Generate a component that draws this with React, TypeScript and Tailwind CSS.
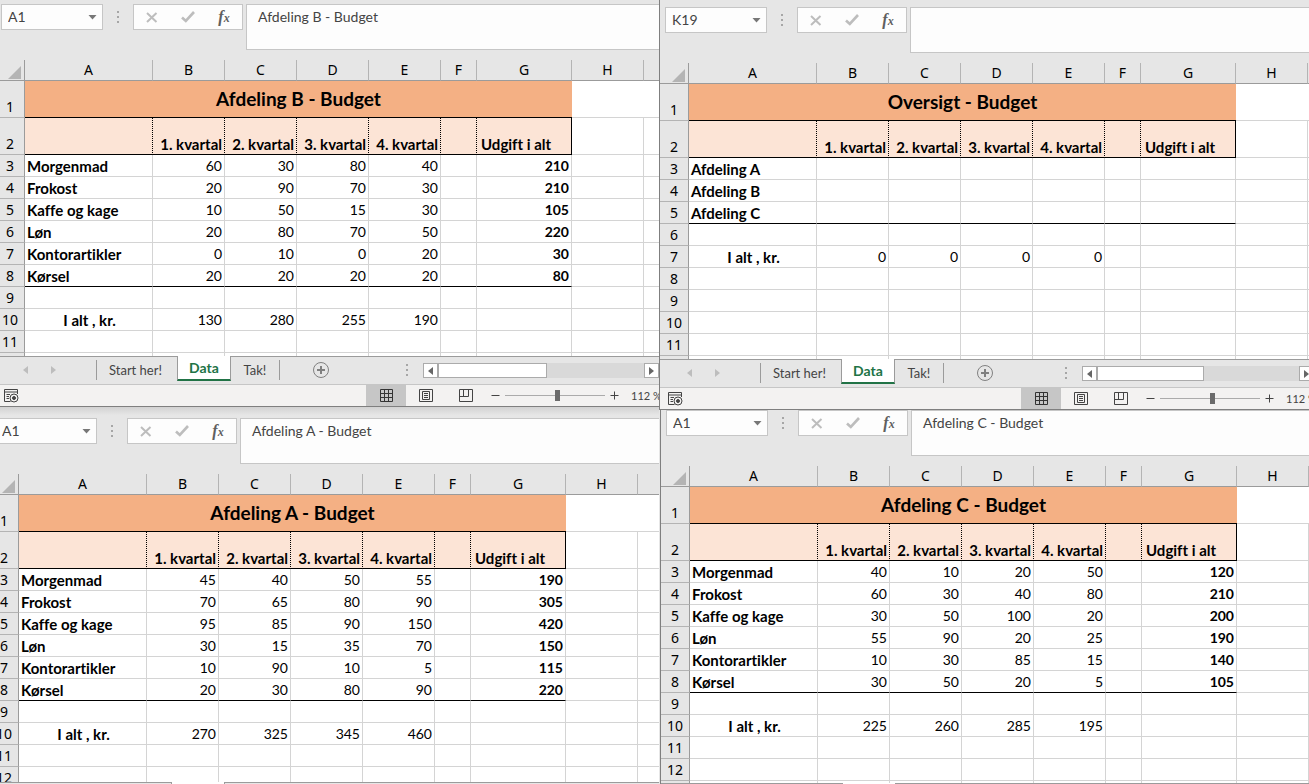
import React from 'react';
import { clsx } from 'clsx';

type Row = {
  label?: string;
  center?: boolean;
  values?: number[];
  total?: number;
  closing?: boolean;
};

type Book = {
  id: string;
  cell: string;
  formula: string;
  title: string;
  rows: Row[];
};

const quarters = ['1. kvartal', '2. kvartal', '3. kvartal', '4. kvartal'];
const letters = ['A', 'B', 'C', 'D', 'E', 'F', 'G', 'H', ''];

const afdelingA: Book = {
  id: 'a',
  cell: 'A1',
  formula: 'Afdeling A - Budget',
  title: 'Afdeling A - Budget',
  rows: [
    { label: 'Morgenmad', values: [45, 40, 50, 55], total: 190 },
    { label: 'Frokost', values: [70, 65, 80, 90], total: 305 },
    { label: 'Kaffe og kage', values: [95, 85, 90, 150], total: 420 },
    { label: 'Løn', values: [30, 15, 35, 70], total: 150 },
    { label: 'Kontorartikler', values: [10, 90, 10, 5], total: 115 },
    { label: 'Kørsel', values: [20, 30, 80, 90], total: 220, closing: true },
    {},
    { label: 'I alt , kr.', center: true, values: [270, 325, 345, 460] },
    {},
    {},
  ],
};

const afdelingB: Book = {
  id: 'b',
  cell: 'A1',
  formula: 'Afdeling B - Budget',
  title: 'Afdeling B - Budget',
  rows: [
    { label: 'Morgenmad', values: [60, 30, 80, 40], total: 210 },
    { label: 'Frokost', values: [20, 90, 70, 30], total: 210 },
    { label: 'Kaffe og kage', values: [10, 50, 15, 30], total: 105 },
    { label: 'Løn', values: [20, 80, 70, 50], total: 220 },
    { label: 'Kontorartikler', values: [0, 10, 0, 20], total: 30 },
    { label: 'Kørsel', values: [20, 20, 20, 20], total: 80, closing: true },
    {},
    { label: 'I alt , kr.', center: true, values: [130, 280, 255, 190] },
    {},
  ],
};

const afdelingC: Book = {
  id: 'c',
  cell: 'A1',
  formula: 'Afdeling C - Budget',
  title: 'Afdeling C - Budget',
  rows: [
    { label: 'Morgenmad', values: [40, 10, 20, 50], total: 120 },
    { label: 'Frokost', values: [60, 30, 40, 80], total: 210 },
    { label: 'Kaffe og kage', values: [30, 50, 100, 20], total: 200 },
    { label: 'Løn', values: [55, 90, 20, 25], total: 190 },
    { label: 'Kontorartikler', values: [10, 30, 85, 15], total: 140 },
    { label: 'Kørsel', values: [30, 50, 20, 5], total: 105, closing: true },
    {},
    { label: 'I alt , kr.', center: true, values: [225, 260, 285, 195] },
    {},
    {},
  ],
};

const oversigt: Book = {
  id: 'oversigt',
  cell: 'K19',
  formula: '',
  title: 'Oversigt - Budget',
  rows: [
    { label: 'Afdeling A' },
    { label: 'Afdeling B' },
    { label: 'Afdeling C', closing: true },
    {},
    { label: 'I alt , kr.', center: true, values: [0, 0, 0, 0] },
    {},
    {},
    {},
    {},
  ],
};

function Dots() {
  return (
    <svg width="3" height="12" viewBox="0 0 3 12" fill="#a6a6a6" aria-hidden="true">
      <rect width="2" height="2" />
      <rect y="5" width="2" height="2" />
      <rect y="10" width="2" height="2" />
    </svg>
  );
}

function FormulaBar({ book }: { book: Book }) {
  return (
    <div className="flex h-[46px] items-start pl-[5px]">
      <div className="flex h-[26px] w-[102px] shrink-0 items-center border border-[#c6c6c6] bg-[#fdfdfd] pr-[5px] pl-1.5">
        <input
          aria-label="Navneboks"
          defaultValue={book.cell}
          className="w-full min-w-0 bg-transparent text-sm text-[#444] outline-none"
        />
        <button type="button" aria-label="Vis navne" className="shrink-0">
          <svg width="9" height="5" viewBox="0 0 9 5" fill="#777">
            <path d="M0.500 0H8.500L4.500 4.500Z" />
          </svg>
        </button>
      </div>
      <div className="flex h-[26px] w-[30px] shrink-0 items-center justify-center">
        <Dots />
      </div>
      <div className="flex h-[26px] w-[110px] shrink-0 items-center border border-[#c6c6c6] bg-[#fdfdfd]">
        <button type="button" aria-label="Annuller" className="flex flex-1 justify-center">
          <svg width="12" height="11" viewBox="0 0 12 11" fill="none" stroke="#bdbdbd" strokeWidth="2">
            <path d="M1 1L10.500 10M10.500 1L1 10" />
          </svg>
        </button>
        <button type="button" aria-label="Enter" className="flex flex-1 justify-center">
          <svg width="14" height="12" viewBox="0 0 14 12" fill="none" stroke="#bdbdbd" strokeWidth="2.600">
            <path d="M1 6.500L4.800 10L13 1" />
          </svg>
        </button>
        <button
          type="button"
          aria-label="Indsæt funktion"
          className="flex-1 font-['Liberation_Serif',serif] text-base leading-5 font-bold text-[#5f5f5f] italic"
        >
          f<span className="text-xs">x</span>
        </button>
      </div>
      <textarea
        aria-label="Formellinje"
        defaultValue={book.formula}
        className="ml-[3px] h-[46px] min-w-0 flex-1 resize-none overflow-hidden border border-r-0 border-[#c6c6c6] bg-[#fdfdfd] px-[11px] py-0.5 text-sm leading-5 text-[#444] outline-none"
      />
    </div>
  );
}

function RowHead({ n }: { n?: number }) {
  return (
    <th
      scope="row"
      className="border-r border-b border-r-[#9b9b9b] border-b-[#b4b4b4] bg-[#e6e6e6] p-0 text-center align-bottom font-['Noto_Sans',sans-serif] text-sm leading-5 font-normal"
    >
      {n}
    </th>
  );
}

function Sheet({ book }: { book: Book }) {
  return (
    <table className="w-[680px] table-fixed border-separate border-spacing-0 text-black">
      <colgroup>
        <col className="w-[29px]" />
        <col className="w-[128px]" />
        <col className="w-[72px]" />
        <col className="w-[72px]" />
        <col className="w-[72px]" />
        <col className="w-[72px]" />
        <col className="w-[36px]" />
        <col className="w-[95px]" />
        <col className="w-[72px]" />
        <col className="w-[32px]" />
      </colgroup>
      <thead>
        <tr className="h-[21px]">
          <td className="border-r border-b border-[#9b9b9b] p-0 align-bottom">
            <svg className="mr-[3px] mb-px ml-auto" width="13" height="13" viewBox="0 0 13 13" fill="#b4b4b4">
              <path d="M13 0V13H0Z" />
            </svg>
          </td>
          {letters.map((letter, i) => (
            <th
              key={i}
              scope="col"
              className="border-r border-b border-r-[#b4b4b4] border-b-[#9b9b9b] p-0 font-['Noto_Sans',sans-serif] text-sm leading-5 font-normal"
            >
              {letter}
            </th>
          ))}
        </tr>
      </thead>
      <tbody className="bg-white text-sm leading-5">
        <tr className="h-[37px]">
          <RowHead n={1} />
          <td colSpan={7} className="border-b border-black bg-[#f4b084] p-0 text-center text-[19px] leading-6 font-bold">
            {book.title}
          </td>
          <td className="border-b border-[#d4d4d4] p-0" />
          <td className="border-b border-[#d4d4d4] p-0" />
        </tr>
        <tr className="h-[37px] align-bottom text-[15px] leading-5">
          <RowHead n={2} />
          <td className="border-r border-b border-black bg-[#fce4d6] p-0 [border-right-style:dotted]" />
          {quarters.map((q) => (
            <td
              key={q}
              className="border-r border-b border-black bg-[#fce4d6] p-0 pr-0.5 text-right font-bold whitespace-nowrap [border-right-style:dotted]"
            >
              {q}
            </td>
          ))}
          <td className="border-r border-b border-black bg-[#fce4d6] p-0 [border-right-style:dotted]" />
          <td className="border-r border-b border-black bg-[#fce4d6] p-0 pl-1 font-bold">Udgift i alt</td>
          <td className="border-r border-b border-[#d4d4d4] p-0" />
          <td className="border-b border-[#d4d4d4] p-0" />
        </tr>
        {book.rows.map((row, i) => {
          const cell = clsx(
            'border-r border-b border-r-[#d4d4d4] p-0',
            row.closing ? 'border-b-black' : 'border-b-[#d4d4d4]',
          );
          return (
            <tr key={i} className="h-[22px]">
              <RowHead n={i + 3} />
              <td className={clsx(cell, 'pl-0.5 text-[15px] leading-5 font-bold', row.center && 'text-center')}>
                {row.label}
              </td>
              {quarters.map((q, j) => (
                <td key={q} className={clsx(cell, 'pr-0.5 text-right')}>
                  {row.values?.[j]}
                </td>
              ))}
              <td className={cell} />
              <td className={clsx(cell, 'pr-0.5 text-right font-bold')}>{row.total}</td>
              <td className="border-r border-b border-[#d4d4d4] p-0" />
              <td className="border-b border-[#d4d4d4] p-0" />
            </tr>
          );
        })}
        {/* top edge of the next row */}
        <tr className="h-[3px]">
          <td className="border-r border-[#9b9b9b] bg-[#e6e6e6] p-0" />
          {letters.map((_, i) => (
            <td key={i} className="border-r border-[#d4d4d4] p-0" />
          ))}
        </tr>
      </tbody>
    </table>
  );
}

function TabStrip({ wide }: { wide?: boolean }) {
  return (
    <div className="flex h-7 shrink-0 items-start bg-[#e6e6e6] text-[13px] leading-5 text-[#444]">
      <div className="flex h-7 w-[181px] shrink-0 items-start border-t border-[#9b9b9b] pt-[3px]">
        <button type="button" aria-label="Forrige ark" className="mt-1.5 ml-[27px]">
          <svg width="5" height="8" viewBox="0 0 5 8" fill="#bdbdbd">
            <path d="M5 0V8L0 4Z" />
          </svg>
        </button>
        <button type="button" aria-label="Næste ark" className="mt-1.5 ml-[23px]">
          <svg width="5" height="8" viewBox="0 0 5 8" fill="#bdbdbd">
            <path d="M0 0V8L5 4Z" />
          </svg>
        </button>
        <button type="button" className="ml-10 h-5 border-l border-[#9b9b9b] pl-3 whitespace-nowrap">
          Start her!
        </button>
      </div>
      <button
        type="button"
        className="h-[25px] w-[54px] shrink-0 border-x border-b-2 border-x-[#9b9b9b] border-b-[#217346] bg-white text-sm font-bold text-[#217346]"
      >
        Data
      </button>
      <div className="flex h-7 min-w-0 flex-1 items-start border-t border-[#9b9b9b] pt-[3px]">
        <button type="button" className="h-5 w-[49px] shrink-0 border-r border-[#9b9b9b]">
          Tak!
        </button>
        <button type="button" aria-label="Nyt ark" className="mt-0.5 ml-[33px] shrink-0">
          <svg width="16" height="16" viewBox="0 0 16 16" fill="none" stroke="#808080">
            <circle cx="8" cy="8" r="7.500" />
            <path d="M8 4V12M4 8H12" strokeWidth="2" />
          </svg>
        </button>
        <div className={clsx('mt-1 shrink-0', wide ? 'ml-[77px]' : 'ml-[72px]')}>
          <Dots />
        </div>
        <div className={clsx('mt-[3px] ml-[14px] flex h-[15px] flex-1 bg-[#d9d9d9]', !wide && '-mr-[5px]')}>
          <button
            type="button"
            aria-label="Rul til venstre"
            className="flex w-[15px] shrink-0 items-center justify-center border border-[#ababab] bg-white"
          >
            <svg width="5" height="8" viewBox="0 0 5 8" fill="#666">
              <path d="M5 0V8L0 4Z" />
            </svg>
          </button>
          <div className={clsx('shrink-0 border border-[#ababab] bg-white', wide ? 'w-[109px]' : 'w-[107px]')} />
          <button
            type="button"
            aria-label="Rul til højre"
            className="ml-auto flex w-[15px] shrink-0 items-center justify-center border border-[#ababab] bg-white"
          >
            <svg width="5" height="8" viewBox="0 0 5 8" fill="#666">
              <path d="M0 0V8L5 4Z" />
            </svg>
          </button>
        </div>
      </div>
    </div>
  );
}

function StatusBar({ wide }: { wide?: boolean }) {
  return (
    <div className="flex h-[22px] shrink-0 items-center border-t border-[#c6c6c6] bg-[#f3f2f1] pl-2 text-[#444]">
      <button type="button" aria-label="Optag makro">
        <svg width="15" height="14" viewBox="0 0 15 14" fill="none" stroke="#444">
          <path d="M6.500 12.500H0.500V0.500H13.500V5M0.500 3H13.500M2.500 5.500H6M2.500 7.500H5M2.500 9.500H5" />
          <circle cx="10" cy="9" r="4" />
          <circle cx="10" cy="9" r="1.500" fill="#444" />
        </svg>
      </button>
      <div className={clsx('ml-auto flex h-[21px] w-[299px] shrink-0 items-center', wide ? '-mr-1.5' : '-mr-[11px]')}>
        <button
          type="button"
          aria-label="Normal"
          className="flex h-full w-10 shrink-0 items-center justify-center bg-[#c6c6c6]"
        >
          <svg width="13" height="13" viewBox="0 0 13 13" fill="none" stroke="#333">
            <path d="M0.500 0.500H12.500V12.500H0.500ZM4.500 0V13M8.500 0V13M0 4.500H13M0 8.500H13" />
          </svg>
        </button>
        <button type="button" aria-label="Sidelayout" className="flex w-10 shrink-0 justify-center">
          <svg width="14" height="13" viewBox="0 0 14 13" fill="none" stroke="#444">
            <path d="M0.500 0.500H13.500V12.500H0.500ZM3.500 2.500H10.500V10.500H3.500ZM5 4.500H9M5 6.500H9M5 8.500H9" />
          </svg>
        </button>
        <button type="button" aria-label="Vis sideskift" className="flex w-10 shrink-0 justify-center">
          <svg width="14" height="13" viewBox="0 0 14 13" fill="none" stroke="#444">
            <path d="M0.500 0.500H13.500V12.500H0.500ZM4.500 0.500V7.500M9.500 0.500V7.500H0.500" />
          </svg>
        </button>
        <button type="button" aria-label="Zoom ud" className="ml-[5px] shrink-0">
          <svg width="9" height="9" viewBox="0 0 9 9" stroke="#444">
            <path d="M0.500 4.500H8.500" />
          </svg>
        </button>
        <input
          type="range"
          aria-label="Zoom"
          min={0}
          max={100}
          defaultValue={53}
          className="mx-[5px] h-[11px] w-[100px] shrink-0 appearance-none bg-[linear-gradient(#ababab,#ababab)] bg-[length:100%_1px] bg-center bg-no-repeat [&::-webkit-slider-thumb]:h-[11px] [&::-webkit-slider-thumb]:w-[5px] [&::-webkit-slider-thumb]:appearance-none [&::-webkit-slider-thumb]:bg-[#6b6b6b]"
        />
        <button type="button" aria-label="Zoom ind" className="shrink-0">
          <svg width="9" height="9" viewBox="0 0 9 9" stroke="#444">
            <path d="M0.500 4.500H8.500M4.500 0.500V8.500" />
          </svg>
        </button>
        <span className="ml-3 text-[11px] leading-4 whitespace-nowrap">112 %</span>
      </div>
    </div>
  );
}

function App() {
  return (
    <main className="grid h-screen grid-cols-[659fr_650fr] overflow-hidden bg-[#e6e6e6] font-[Lato,sans-serif] [font-variant-ligatures:none]">
      <div className="flex min-h-0 min-w-0 flex-col">
        <section className="shrink-0 overflow-hidden border-b border-[#7f7f7f]">
          <div className="-ml-1 pt-1">
            <FormulaBar book={afdelingB} />
            <div className="overflow-hidden pt-2.5">
              <Sheet book={afdelingB} />
            </div>
            <TabStrip wide />
            <StatusBar wide />
          </div>
        </section>
        <section className="flex min-h-0 flex-1 flex-col overflow-hidden">
          <div className="-ml-2.5 flex min-h-0 flex-1 flex-col bg-[linear-gradient(#d2d2d2,#e6e6e6_8px)] pt-[11px]">
            <FormulaBar book={afdelingA} />
            <div className="min-h-0 flex-1 overflow-hidden pt-2.5">
              <Sheet book={afdelingA} />
            </div>
            <div className="h-0.5 shrink-0 overflow-hidden">
              <TabStrip wide />
            </div>
          </div>
        </section>
      </div>
      <div className="flex min-h-0 min-w-0 flex-col">
        <section className="shrink-0 overflow-hidden border-b border-l border-[#7f7f7f] pt-[7px]">
          <FormulaBar book={oversigt} />
          <div className="overflow-hidden pt-2.5">
            <Sheet book={oversigt} />
          </div>
          <TabStrip />
          <StatusBar />
        </section>
        <section className="ml-px flex min-h-0 flex-1 flex-col overflow-hidden border-l border-[#7f7f7f]">
          <FormulaBar book={afdelingC} />
          <div className="min-h-0 flex-1 overflow-hidden pt-2.5">
            <Sheet book={afdelingC} />
          </div>
          <div className="h-px shrink-0 overflow-hidden">
            <TabStrip />
          </div>
        </section>
      </div>
    </main>
  );
}

export default App;
